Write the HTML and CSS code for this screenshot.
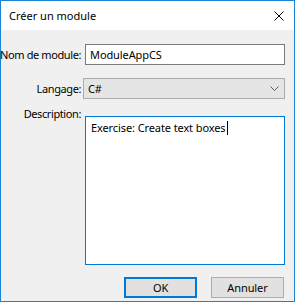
FILE: index.html
```html
<!DOCTYPE html>
<html lang="fr">
<head>
<meta charset="utf-8">
<title>Créer un module</title>
<link rel="stylesheet" href="styles.css">
</head>
<body>
<div class="window">
  <div class="titlebar">
    <span class="title">Créer un module</span>
    <svg class="close" width="10" height="10" viewBox="0 0 10 10"><path d="M0.5 0.5 L9.5 9.5 M9.5 0.5 L0.5 9.5" stroke="#000" stroke-width="1" fill="none"/></svg>
  </div>
  <div class="content">
    <div class="form">
      <label class="lbl lbl-mid">Nom de module:</label>
      <div class="input">ModuleAppCS</div>
      <label class="lbl lbl-mid">Langage:</label>
      <div class="combo"><span>C#</span><svg width="9" height="5" viewBox="0 0 9 5"><path d="M0.5 0.5 L4.5 4.5 L8.5 0.5" stroke="#5a5a5a" stroke-width="1" fill="none"/></svg></div>
      <label class="lbl lbl-top">Description:</label>
      <div class="textarea">Exercise: Create text boxes<span class="caret"></span></div>
    </div>
    <div class="buttons">
      <div class="btn btn-default">OK</div>
      <div class="btn">Annuler</div>
    </div>
  </div>
</div>
</body>
</html>
```

FILE: styles.css
```css
* { box-sizing: border-box; }
html, body { margin: 0; padding: 0; }
body {
  font-family: "Noto Sans", "Open Sans", sans-serif;
  font-size: 11px;
  letter-spacing: -0.1px;
  color: #000;
  background: #fff;
}
.window {
  width: 295px;
  height: 302px;
  border: 1px solid #1883d7;
  display: flex;
  flex-direction: column;
  background: #f0f0f0;
}
.titlebar {
  height: 29px;
  background: #fff;
  display: flex;
  align-items: center;
  justify-content: space-between;
  padding: 0 10px 0 8px;
  flex: none;
}
.title {
  font-size: 11px;
  letter-spacing: 0;
}
.close { display: block; margin-top: 1px; }
.content {
  flex: 1;
  display: flex;
  flex-direction: column;
  padding: 14px 9px 3px 0;
}
.form {
  flex: 1;
  display: grid;
  grid-template-columns: 80px 1fr;
  grid-template-rows: 21px 21px 1fr;
  column-gap: 2px;
  row-gap: 13px;
}
.lbl {
  justify-self: end;
  text-align: right;
  white-space: nowrap;
  line-height: 16px;
  letter-spacing: -0.4px;
}
.lbl-mid { align-self: center; }
.lbl-top { align-self: start; margin-top: -6px; }
.input {
  margin-left: 2px;
  height: 21px;
  border: 1px solid #7a7a7a;
  background: #fff;
  padding: 0 4px;
  line-height: 19px;
}
.combo {
  height: 21px;
  border: 1px solid #adadad;
  background: #e5e5e5;
  display: flex;
  align-items: center;
  justify-content: space-between;
  padding: 0 5px 0 4px;
  line-height: 19px;
}
.combo svg { display: block; }
.textarea {
  margin-left: 2px;
  margin-top: 4px;
  border: 1px solid #0078d7;
  background: #fff;
  padding: 3px 5px;
  line-height: 16px;
}
.caret {
  display: inline-block;
  width: 1px;
  height: 14px;
  background: #000;
  vertical-align: -3px;
  margin-left: 1px;
}
.buttons {
  display: flex;
  justify-content: flex-end;
  gap: 14px;
  margin-top: 12px;
  padding-right: 1px;
}
.btn {
  width: 73px;
  height: 21px;
  border: 1px solid #adadad;
  background: #e1e1e1;
  text-align: center;
  line-height: 19px;
}
.btn-default {
  border: 2px solid #0078d7;
  line-height: 17px;
}
```
